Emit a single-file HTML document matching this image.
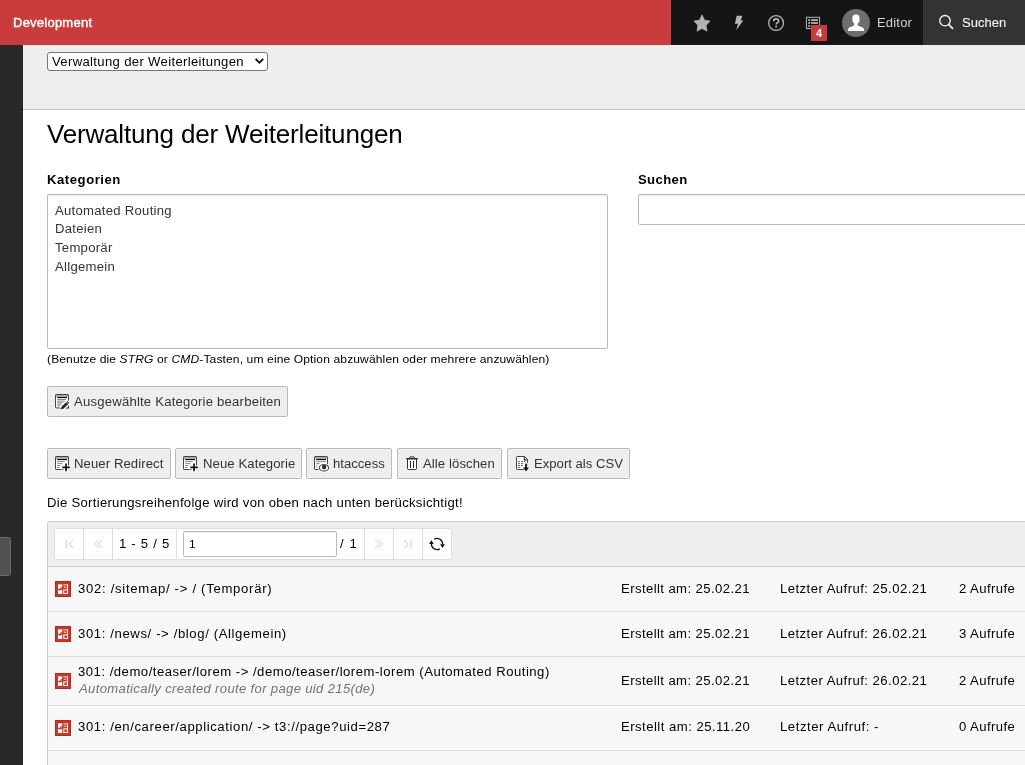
<!DOCTYPE html>
<html lang="de">
<head>
<meta charset="utf-8">
<title>Verwaltung der Weiterleitungen</title>
<style>
*{box-sizing:border-box}
html,body{margin:0;padding:0}
body{width:1025px;height:765px;overflow:hidden;position:relative;background:#fff;font-family:"Liberation Sans",sans-serif;font-size:12.5px;color:#000}
.a,.t,.btn,.pc,.ic{position:absolute}
.t{white-space:nowrap;line-height:16px;height:16px;transform-origin:0 0;will-change:transform}
.t i{font-style:italic}
#topbar{left:0;top:0;width:1025px;height:45px;background:#c83c3c}
#tools{left:671px;top:0;width:252px;height:45px;background:#151515}
#search{left:923px;top:0;width:102px;height:45px;background:#333}
#sidebar{left:0;top:45px;width:23px;height:720px;background:#292929}
#handle{left:-1px;top:492px;width:12px;height:39px;background:#515151;border:1px solid #6a6a6a;border-radius:0 3px 3px 0}
#docheader{left:23px;top:45px;width:1002px;height:65px;background:#eee;border-bottom:1px solid #c3c3c3}
#sel{left:47px;top:52px;width:221px;height:19px;background:#fff;border:1px solid #767676;border-radius:3px}
#listbox{left:47px;top:194px;width:561px;height:155px;background:#fff;border:1px solid #bbb;border-radius:2px;box-shadow:inset 0 1px 1px rgba(0,0,0,.075)}
#sinput{left:638px;top:194px;width:400px;height:31px;background:#fff;border:1px solid #bbb;border-radius:2px;box-shadow:inset 0 1px 1px rgba(0,0,0,.075)}
.btn{height:31px;background:#eee;border:1px solid #bbb;border-radius:2px}
#panel{left:47px;top:521px;width:1000px;height:260px;background:#f7f7f7;border:1px solid #ccc;border-radius:2px 0 0 0}
#phead{left:0;top:0;width:998px;height:45px;background:#eee;border-bottom:1px solid #ccc}
.rl{position:absolute;left:0;width:998px;height:1px;background:#ddd}
.pc{top:528px;height:32px;background:#fff;border:1px solid #ddd}
#pinput{left:183px;top:531px;width:154px;height:26px;background:#fff;border:1px solid #bbb;border-radius:2px;box-shadow:inset 0 1px 1px rgba(0,0,0,.075)}
#badge{left:811px;top:25px;width:16px;height:16px;background:#c83c3c}
#avatar{left:842px;top:9px;width:28px;height:28px;border-radius:50%;background:#6e6e6e}
svg{display:block;overflow:visible}

</style>
</head>
<body>
<div id="topbar" class="a"></div>
<div id="tools" class="a"></div>
<div id="search" class="a"></div>
<div id="sidebar" class="a"><div id="handle" class="a"></div></div>
<div id="docheader" class="a"></div>
<div id="sel" class="a"></div>
<svg class="ic" style="left:254px;top:57px" width="11" height="8" viewBox="0 0 11 8"><path d="M1.6 1.8 L5.4 5.8 L9.2 1.8" fill="none" stroke="#000" stroke-width="1.7"/></svg>
<div id="listbox" class="a"></div>
<div id="sinput" class="a"></div>
<div class="btn" style="left:47px;top:386px;width:241px"></div>
<div class="btn" style="left:47px;top:448px;width:124px"></div>
<div class="btn" style="left:175px;top:448px;width:127px"></div>
<div class="btn" style="left:306px;top:448px;width:86px"></div>
<div class="btn" style="left:397px;top:448px;width:105px"></div>
<div class="btn" style="left:507px;top:448px;width:123px"></div>
<div id="panel" class="a"><div id="phead" class="a"></div>
<div class="rl" style="top:89px"></div><div class="rl" style="top:134px"></div><div class="rl" style="top:183px"></div><div class="rl" style="top:228px"></div>
</div>
<div class="pc" style="left:54px;width:30px;border-radius:2px 0 0 2px"></div>
<div class="pc" style="left:83px;width:30px"></div>
<div class="pc" style="left:112px;width:65px"></div>
<div class="pc" style="left:176px;width:189px"></div>
<div class="pc" style="left:364px;width:30px"></div>
<div class="pc" style="left:393px;width:30px"></div>
<div class="pc" style="left:422px;width:30px;border-radius:0 2px 2px 0"></div>
<div id="pinput" class="a"></div>
<!-- pagination icons -->
<svg class="ic" style="left:64px;top:538px" width="12" height="12" viewBox="0 0 12 12"><path d="M2.3 2 V10.2 M9.2 2.2 L4.9 6.1 L9.2 10" fill="none" stroke="#ccc" stroke-width="1"/></svg>
<svg class="ic" style="left:93px;top:538px" width="12" height="12" viewBox="0 0 12 12"><path d="M5.8 2.2 L1.6 6.1 L5.8 10 M9 2.2 L4.8 6.1 L9 10" fill="none" stroke="#ccc" stroke-width="1"/></svg>
<svg class="ic" style="left:373px;top:538px" width="12" height="12" viewBox="0 0 12 12"><path d="M2.2 2.2 L6.4 6.1 L2.2 10 M5.4 2.2 L9.6 6.1 L5.4 10" fill="none" stroke="#ccc" stroke-width="1"/></svg>
<svg class="ic" style="left:402px;top:538px" width="12" height="12" viewBox="0 0 12 12"><path d="M2.2 2.2 L6.5 6.1 L2.2 10 M8.8 2 V10.2" fill="none" stroke="#ccc" stroke-width="1"/></svg>
<svg class="ic" style="left:428px;top:536px" width="18" height="16" viewBox="0 0 18 16"><path d="M6.2 3.15 A5.6 5.6 0 0 1 14.6 8.4" fill="none" stroke="#111" stroke-width="1.3"/><path d="M3.4 7.6 A5.6 5.6 0 0 0 11.8 12.85" fill="none" stroke="#111" stroke-width="1.3"/><polygon points="3.4,4.3 1.1,7.9 5.8,7.9" fill="#111"/><polygon points="12.1,8.2 16.9,8.2 14.5,12" fill="#111"/></svg>
<!-- topbar icons -->
<svg class="ic" style="left:693px;top:14px" width="19" height="19" viewBox="0 0 19 19"><polygon points="9.00,0.85 11.53,6.17 17.08,7.08 13.09,11.27 14.00,17.15 9.00,14.42 4.00,17.15 4.91,11.27 0.92,7.08 6.47,6.17" fill="#b4b4b4" stroke="#b4b4b4" stroke-width=".7" stroke-linejoin="round"/></svg>
<svg class="ic" style="left:734px;top:15px" width="11" height="16" viewBox="0 0 11 16"><polygon points="2.7,0.8 8.3,0.8 6.8,5.5 9.3,5.5 2.2,15.3 3.9,8.7 0.9,8.7" fill="#b4b4b4"/></svg>
<svg class="ic" style="left:767px;top:14px" width="18" height="18" viewBox="0 0 18 18"><circle cx="9.1" cy="9" r="7.4" fill="none" stroke="#b4b4b4" stroke-width="1.3"/><path d="M6.6 7.3 C6.6 5.6 7.8 4.9 9.1 4.9 C10.5 4.9 11.6 5.7 11.6 7 C11.6 8.6 9.2 8.8 9.2 10.6" fill="none" stroke="#b4b4b4" stroke-width="1.7"/><rect x="8.3" y="11.7" width="1.8" height="1.7" fill="#b4b4b4"/></svg>
<svg class="ic" style="left:805px;top:16px" width="16" height="14" viewBox="0 0 16 14"><rect x="1.4" y="1.3" width="13.2" height="11.2" fill="none" stroke="#b4b4b4" stroke-width="1"/><g fill="#b4b4b4"><rect x="3.2" y="3.2" width="1.9" height="1.8"/><rect x="6.1" y="3.2" width="6.8" height="1.8"/><rect x="3.2" y="6.1" width="1.9" height="1.8"/><rect x="6.1" y="6.1" width="6.8" height="1.8"/><rect x="3.2" y="9" width="1.9" height="1.8"/><rect x="6.1" y="9" width="6.8" height="1.8"/></g></svg>
<div id="badge" class="a"></div>
<div id="avatar" class="a"><svg width="28" height="28" viewBox="0 0 28 28"><g fill="#fff"><rect x="10.5" y="5.6" width="7" height="8.9" rx="3.1"/><rect x="12.2" y="12.5" width="3.4" height="5"/><path d="M5.9 21.9 C5.9 19.4 6.6 18.6 8.6 18 L12.2 16.6 L13.9 17.6 L15.6 16.6 L19.4 18 C21.4 18.6 22.2 19.4 22.2 21.9 Z"/></g></svg></div>
<svg class="ic" style="left:938px;top:14px" width="17" height="17" viewBox="0 0 17 17"><circle cx="7" cy="6.7" r="5.2" fill="none" stroke="#f2f2f2" stroke-width="1.4"/><path d="M10.8 10.6 L14.5 14.3" stroke="#f2f2f2" stroke-width="1.7" stroke-linecap="round"/></svg>
<!-- button icons -->
<svg class="ic" style="left:55px;top:394px" width="16" height="16" viewBox="0 0 16 16"><rect x=".5" y=".5" width="13" height="13.4" rx=".6" fill="#fff" stroke="#444"/><rect x="1" y="1" width="12" height="1.9" fill="#a6a6a6"/><rect x="2.2" y="3" width="9.8" height="1.1" fill="#000"/><g fill="#888"><rect x="2.2" y="5" width="9" height="1"/><rect x="2.2" y="6.6" width="7.5" height="1"/><rect x="2.2" y="8.2" width="6" height="1"/><rect x="2.2" y="9.8" width="4.5" height="1"/><rect x="2.2" y="11.4" width="3" height="1"/></g><path d="M6 15 L14.2 7.3" stroke="#fff" stroke-width="5.2"/><path d="M7.2 13.9 L13.4 7.9" stroke="#222" stroke-width="2.8"/><path d="M10.9 7.4 L13.9 10.4" stroke="#fff" stroke-width=".8"/><polygon points="5.6,15.4 6.2,13 8,14.8" fill="#222"/><polygon points="12.2,14.4 14,12.4 14,14.4" fill="#333"/></svg>
<svg class="ic" style="left:55px;top:456px" width="16" height="16" viewBox="0 0 16 16"><rect x=".5" y=".5" width="13" height="13" rx=".6" fill="#fff" stroke="#444"/><rect x="1" y="1" width="12" height="1.9" fill="#a6a6a6"/><rect x="2.2" y="3" width="9.8" height="1.1" fill="#000"/><g fill="#888"><rect x="2.2" y="5.1" width="7.4" height="1"/><rect x="2.2" y="7.1" width="5.3" height="1"/><rect x="2.2" y="9" width="3.2" height="1"/><rect x="2.2" y="11" width="2.5" height="1"/></g><path d="M11 6.6 V16 M6.4 11.4 H15.8" stroke="#fff" stroke-width="4"/><path d="M11 7.6 V15.2 M7.2 11.4 H14.8" stroke="#111" stroke-width="1.7"/></svg>
<svg class="ic" style="left:183px;top:456px" width="16" height="16" viewBox="0 0 16 16"><rect x=".5" y=".5" width="13" height="13" rx=".6" fill="#fff" stroke="#444"/><rect x="1" y="1" width="12" height="1.9" fill="#a6a6a6"/><rect x="2.2" y="3" width="9.8" height="1.1" fill="#000"/><g fill="#888"><rect x="2.2" y="5.1" width="7.4" height="1"/><rect x="2.2" y="7.1" width="5.3" height="1"/><rect x="2.2" y="9" width="3.2" height="1"/><rect x="2.2" y="11" width="2.5" height="1"/></g><path d="M11 6.6 V16 M6.4 11.4 H15.8" stroke="#fff" stroke-width="4"/><path d="M11 7.6 V15.2 M7.2 11.4 H14.8" stroke="#111" stroke-width="1.7"/></svg>
<svg class="ic" style="left:314px;top:456px" width="16" height="16" viewBox="0 0 16 16"><rect x=".5" y=".5" width="13" height="13" rx=".6" fill="#fff" stroke="#444"/><rect x="1" y="1" width="12" height="1.9" fill="#a6a6a6"/><rect x="2.2" y="3" width="9.8" height="1.1" fill="#000"/><g fill="#888"><rect x="2.2" y="5.1" width="9.6" height="1"/><rect x="2.2" y="7.1" width="3.4" height="1"/><rect x="2.2" y="9" width="1.2" height="1"/><rect x="2.2" y="11" width="1" height="1"/></g><ellipse cx="10" cy="11.8" rx="6" ry="4.6" fill="#fff"/><ellipse cx="10" cy="11.8" rx="4.7" ry="3.3" fill="#fff" stroke="#555" stroke-width="1.2"/><circle cx="10.1" cy="11.1" r="2.3" fill="#333"/></svg>
<svg class="ic" style="left:406px;top:456px" width="13" height="15" viewBox="0 0 13 15"><path d="M1.5 3 V12.5 Q1.5 13.5 2.5 13.5 H9.5 Q10.5 13.5 10.5 12.5 V3 Z" fill="#fff" stroke="#333" stroke-width="1"/><path d="M0 2.6 H12" stroke="#333" stroke-width="1.1"/><path d="M3.5 2.4 L4 0.9 H8.1 L8.6 2.4" fill="none" stroke="#333" stroke-width="1"/><path d="M4.5 5 V12 M7.5 5 V12" stroke="#222" stroke-width="1"/></svg>
<svg class="ic" style="left:516px;top:456px" width="16" height="16" viewBox="0 0 16 16"><path d="M.5 1.2 Q.5 .5 1.2 .5 H8.6 L11.5 3.4 V13.5 H1.2 Q.5 13.5 .5 12.8 Z" fill="#fff" stroke="#444"/><path d="M8.3 .5 V3.8 H11.5" fill="none" stroke="#333" stroke-width="1.2"/><g fill="#666"><rect x="2" y="5.1" width="2" height="1"/><rect x="5" y="5.1" width="2" height="1"/><rect x="8" y="5.1" width="1.6" height="1"/><rect x="2" y="7.1" width="2" height="1"/><rect x="5" y="7.1" width="2" height="1"/><rect x="2" y="9" width="2" height="1"/><rect x="5" y="9" width="2" height="1"/><rect x="2" y="11" width="2" height="1"/></g><rect x="8.1" y="6.6" width="3.7" height="5" fill="#fff"/><polygon points="5.6,10.6 14.4,10.6 10,16.6" fill="#fff"/><rect x="9.1" y="7.6" width="1.8" height="5" fill="#111"/><polygon points="7,11.5 13,11.5 10,15.4" fill="#111"/></svg>
<!-- row icons -->
<svg class="ic" style="left:55px;top:581px" width="16" height="16" viewBox="0 0 16 16"><rect x=".5" y=".5" width="15" height="15" fill="#c23a2c" stroke="#b92a1c"/><rect x="3" y="3.4" width="4.2" height="4.5" fill="#fff"/><rect x="3" y="8.9" width="4.2" height="4" fill="#fff"/><rect x="8.3" y="3.4" width="4.7" height="1" fill="#fff" opacity=".8"/><rect x="12" y="3.4" width="1" height="9.5" fill="#fff" opacity=".9"/><rect x="8.3" y="5.6" width="3" height="1.2" fill="#fff" opacity=".7"/><path d="M4.6 9.6 C5 7.6 6.2 6.4 8.6 6.2" fill="none" stroke="#c23a2c" stroke-width="1.2"/><path d="M7 7.2 L9 9 L9 6.4 Z" fill="#c23a2c"/><rect x="8.8" y="8.9" width="3.7" height="3.5" fill="#c23a2c" stroke="#fff" stroke-width="1"/></svg>
<svg class="ic" style="left:55px;top:626px" width="16" height="16" viewBox="0 0 16 16"><rect x=".5" y=".5" width="15" height="15" fill="#c23a2c" stroke="#b92a1c"/><rect x="3" y="3.4" width="4.2" height="4.5" fill="#fff"/><rect x="3" y="8.9" width="4.2" height="4" fill="#fff"/><rect x="8.3" y="3.4" width="4.7" height="1" fill="#fff" opacity=".8"/><rect x="12" y="3.4" width="1" height="9.5" fill="#fff" opacity=".9"/><rect x="8.3" y="5.6" width="3" height="1.2" fill="#fff" opacity=".7"/><path d="M4.6 9.6 C5 7.6 6.2 6.4 8.6 6.2" fill="none" stroke="#c23a2c" stroke-width="1.2"/><path d="M7 7.2 L9 9 L9 6.4 Z" fill="#c23a2c"/><rect x="8.8" y="8.9" width="3.7" height="3.5" fill="#c23a2c" stroke="#fff" stroke-width="1"/></svg>
<svg class="ic" style="left:55px;top:673px" width="16" height="16" viewBox="0 0 16 16"><rect x=".5" y=".5" width="15" height="15" fill="#c23a2c" stroke="#b92a1c"/><rect x="3" y="3.4" width="4.2" height="4.5" fill="#fff"/><rect x="3" y="8.9" width="4.2" height="4" fill="#fff"/><rect x="8.3" y="3.4" width="4.7" height="1" fill="#fff" opacity=".8"/><rect x="12" y="3.4" width="1" height="9.5" fill="#fff" opacity=".9"/><rect x="8.3" y="5.6" width="3" height="1.2" fill="#fff" opacity=".7"/><path d="M4.6 9.6 C5 7.6 6.2 6.4 8.6 6.2" fill="none" stroke="#c23a2c" stroke-width="1.2"/><path d="M7 7.2 L9 9 L9 6.4 Z" fill="#c23a2c"/><rect x="8.8" y="8.9" width="3.7" height="3.5" fill="#c23a2c" stroke="#fff" stroke-width="1"/></svg>
<svg class="ic" style="left:55px;top:720px" width="16" height="16" viewBox="0 0 16 16"><rect x=".5" y=".5" width="15" height="15" fill="#c23a2c" stroke="#b92a1c"/><rect x="3" y="3.4" width="4.2" height="4.5" fill="#fff"/><rect x="3" y="8.9" width="4.2" height="4" fill="#fff"/><rect x="8.3" y="3.4" width="4.7" height="1" fill="#fff" opacity=".8"/><rect x="12" y="3.4" width="1" height="9.5" fill="#fff" opacity=".9"/><rect x="8.3" y="5.6" width="3" height="1.2" fill="#fff" opacity=".7"/><path d="M4.6 9.6 C5 7.6 6.2 6.4 8.6 6.2" fill="none" stroke="#c23a2c" stroke-width="1.2"/><path d="M7 7.2 L9 9 L9 6.4 Z" fill="#c23a2c"/><rect x="8.8" y="8.9" width="3.7" height="3.5" fill="#c23a2c" stroke="#fff" stroke-width="1"/></svg>

<div class="t" style="left:12.8px;top:14.5px;font-size:13px;letter-spacing:0.239px;color:#fff;-webkit-text-stroke:.4px #fff">Development</div>
<div class="t" style="left:876.7px;top:14.5px;font-size:13px;letter-spacing:0.186px;color:#d0d0d0">Editor</div>
<div class="t" style="left:961.7px;top:14.5px;font-size:13px;letter-spacing:0.041px;color:#f4f4f4;-webkit-text-stroke:.1px #f4f4f4">Suchen</div>
<div class="t" style="left:816.2px;top:25.0px;font-size:11px;letter-spacing:0.000px;font-weight:bold;color:#fff">4</div>
<div class="t" style="left:51.6px;top:53.5px;font-size:12.5px;letter-spacing:0.310px;transform:scaleX(1.05);">Verwaltung der Weiterleitungen</div>
<div class="t" style="left:47.2px;top:126.0px;font-size:26px;letter-spacing:-0.178px;color:#000">Verwaltung der Weiterleitungen</div>
<div class="t" style="left:47.1px;top:171.7px;font-size:12.5px;letter-spacing:0.512px;transform:scaleX(1.05);font-weight:bold">Kategorien</div>
<div class="t" style="left:637.6px;top:171.7px;font-size:12.5px;letter-spacing:0.340px;transform:scaleX(1.05);font-weight:bold">Suchen</div>
<div class="t" style="left:55.4px;top:202.7px;font-size:12.5px;letter-spacing:0.252px;transform:scaleX(1.05);color:#333">Automated Routing</div>
<div class="t" style="left:55.4px;top:221.4px;font-size:12.5px;letter-spacing:0.252px;transform:scaleX(1.05);color:#333">Dateien</div>
<div class="t" style="left:55.4px;top:240.0px;font-size:12.5px;letter-spacing:0.252px;transform:scaleX(1.05);color:#333">Temporär</div>
<div class="t" style="left:55.4px;top:258.7px;font-size:12.5px;letter-spacing:0.252px;transform:scaleX(1.05);color:#333">Allgemein</div>
<div class="t" style="left:46.9px;top:350.6px;font-size:11.5px;letter-spacing:0.104px;transform:scaleX(1.05);">(Benutze die <i>STRG</i> or <i>CMD</i>-Tasten, um eine Option abzuwählen oder mehrere anzuwählen)</div>
<div class="t" style="left:73.7px;top:393.7px;font-size:12.5px;letter-spacing:0.192px;transform:scaleX(1.05);color:#333">Ausgewählte Kategorie bearbeiten</div>
<div class="t" style="left:74.4px;top:455.7px;font-size:12.5px;letter-spacing:0.082px;transform:scaleX(1.05);color:#333">Neuer Redirect</div>
<div class="t" style="left:202.7px;top:455.7px;font-size:12.5px;letter-spacing:0.079px;transform:scaleX(1.05);color:#333">Neue Kategorie</div>
<div class="t" style="left:333.4px;top:455.7px;font-size:12.5px;letter-spacing:-0.001px;transform:scaleX(1.05);color:#333">htaccess</div>
<div class="t" style="left:423.0px;top:455.7px;font-size:12.5px;letter-spacing:0.089px;transform:scaleX(1.05);color:#333">Alle löschen</div>
<div class="t" style="left:533.7px;top:455.7px;font-size:12.5px;letter-spacing:-0.008px;transform:scaleX(1.05);color:#333">Export als CSV</div>
<div class="t" style="left:46.9px;top:494.9px;font-size:12.5px;letter-spacing:0.270px;transform:scaleX(1.05);">Die Sortierungsreihenfolge wird von oben nach unten berücksichtigt!</div>
<div class="t" style="left:119.4px;top:536.2px;font-size:12.5px;letter-spacing:0.677px;transform:scaleX(1.05);">1 - 5 / 5</div>
<div class="t" style="left:188.8px;top:536.0px;font-size:11.5px;letter-spacing:0.000px;transform:scaleX(1.05);">1</div>
<div class="t" style="left:340.4px;top:536.2px;font-size:12.5px;letter-spacing:1.047px;transform:scaleX(1.05);">/ 1</div>
<div class="t" style="left:78.0px;top:581.2px;font-size:12.5px;letter-spacing:0.668px;transform:scaleX(1.05);">302: /sitemap/ -&gt; / (Temporär)</div>
<div class="t" style="left:78.0px;top:626.3px;font-size:12.5px;letter-spacing:0.584px;transform:scaleX(1.05);">301: /news/ -&gt; /blog/ (Allgemein)</div>
<div class="t" style="left:78.0px;top:663.8px;font-size:12.5px;letter-spacing:0.472px;transform:scaleX(1.05);">301: /demo/teaser/lorem -&gt; /demo/teaser/lorem-lorem (Automated Routing)</div>
<div class="t" style="left:78.9px;top:681.3px;font-size:12.5px;letter-spacing:0.302px;transform:scaleX(1.05);font-style:italic;color:#737373">Automatically created route for page uid 215(de)</div>
<div class="t" style="left:78.0px;top:719.4px;font-size:12.5px;letter-spacing:0.569px;transform:scaleX(1.05);">301: /en/career/application/ -&gt; t3://page?uid=287</div>
<div class="t" style="left:621.0px;top:581.2px;font-size:12.5px;letter-spacing:0.386px;transform:scaleX(1.05);">Erstellt am: 25.02.21</div>
<div class="t" style="left:779.7px;top:581.2px;font-size:12.5px;letter-spacing:0.429px;transform:scaleX(1.05);">Letzter Aufruf: 25.02.21</div>
<div class="t" style="left:958.9px;top:581.2px;font-size:12.5px;letter-spacing:0.399px;transform:scaleX(1.05);">2 Aufrufe</div>
<div class="t" style="left:621.0px;top:626.3px;font-size:12.5px;letter-spacing:0.386px;transform:scaleX(1.05);">Erstellt am: 25.02.21</div>
<div class="t" style="left:779.7px;top:626.3px;font-size:12.5px;letter-spacing:0.429px;transform:scaleX(1.05);">Letzter Aufruf: 26.02.21</div>
<div class="t" style="left:958.9px;top:626.3px;font-size:12.5px;letter-spacing:0.399px;transform:scaleX(1.05);">3 Aufrufe</div>
<div class="t" style="left:621.0px;top:672.7px;font-size:12.5px;letter-spacing:0.386px;transform:scaleX(1.05);">Erstellt am: 25.02.21</div>
<div class="t" style="left:779.7px;top:672.7px;font-size:12.5px;letter-spacing:0.429px;transform:scaleX(1.05);">Letzter Aufruf: 26.02.21</div>
<div class="t" style="left:958.9px;top:672.7px;font-size:12.5px;letter-spacing:0.399px;transform:scaleX(1.05);">2 Aufrufe</div>
<div class="t" style="left:621.0px;top:719.4px;font-size:12.5px;letter-spacing:0.447px;transform:scaleX(1.05);">Erstellt am: 25.11.20</div>
<div class="t" style="left:779.7px;top:719.4px;font-size:12.5px;letter-spacing:0.521px;transform:scaleX(1.05);">Letzter Aufruf: -</div>
<div class="t" style="left:958.9px;top:719.4px;font-size:12.5px;letter-spacing:0.399px;transform:scaleX(1.05);">0 Aufrufe</div>
</body>
</html>
